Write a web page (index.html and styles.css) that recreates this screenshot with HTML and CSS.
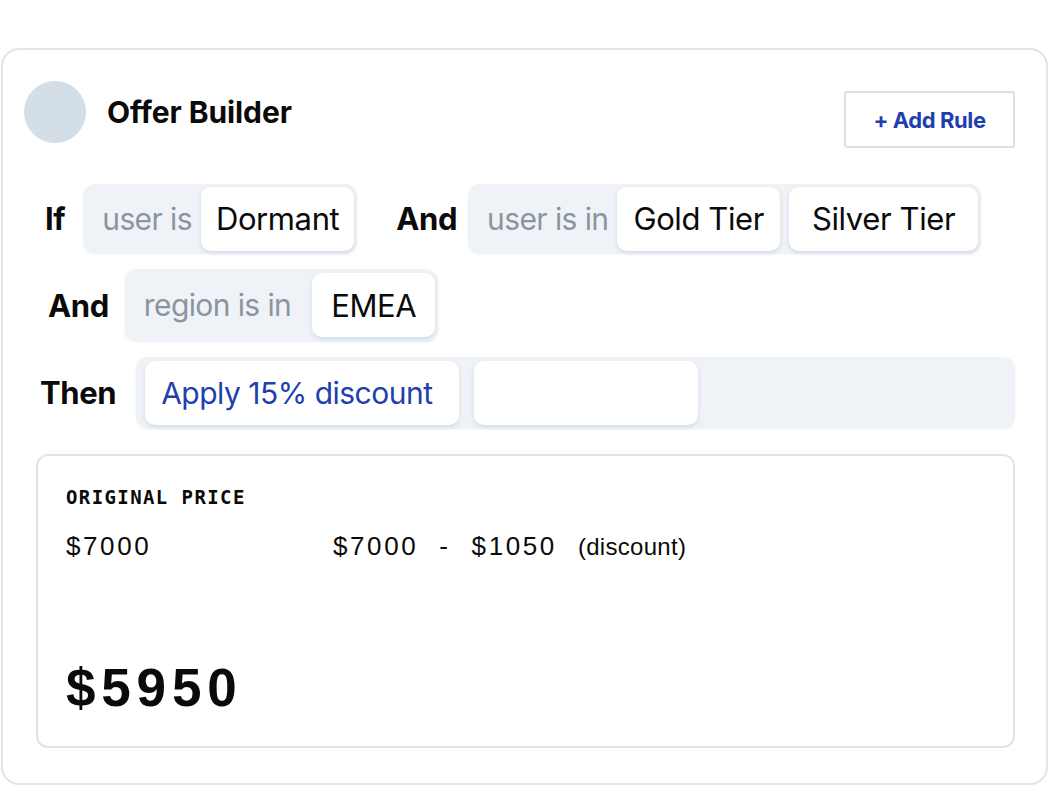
FILE: index.html
```html
<!DOCTYPE html>
<html lang="en">
<head>
<meta charset="utf-8">
<title>Offer Builder</title>
<link rel="stylesheet" href="styles.css">
</head>
<body>
<div class="page">
  <section class="card">
    <header class="header">
      <div class="brand">
        <div class="avatar"></div>
        <h1 class="title">Offer Builder</h1>
      </div>
      <button class="add-btn">+ Add Rule</button>
    </header>

    <div class="rules">
      <div class="row">
        <span class="kw kw-if">If</span>
        <div class="group">
          <span class="label">user is</span>
          <span class="chip">Dormant</span>
        </div>
        <span class="kw kw-and-inline">And</span>
        <div class="group">
          <span class="label">user is in</span>
          <span class="chip chip-gold">Gold Tier</span>
          <span class="chip chip-wide">Silver Tier</span>
        </div>
      </div>

      <div class="row">
        <span class="kw kw-and">And</span>
        <div class="group group-tall">
          <span class="label">region is in</span>
          <span class="chip chip-region">EMEA</span>
        </div>
      </div>

      <div class="row">
        <span class="kw kw-then">Then</span>
        <div class="group group-action">
          <span class="chip chip-action">Apply 15% discount</span>
          <span class="chip chip-empty"></span>
        </div>
      </div>
    </div>

    <div class="price-box">
      <div class="price-label">ORIGINAL PRICE</div>
      <div class="price-lines">
        <span class="num">$7000</span>
        <div class="calc">
          <span class="num">$7000</span>
          <span class="num">-</span>
          <span class="num">$1050</span>
          <span class="note">(discount)</span>
        </div>
      </div>
      <div class="final">$5950</div>
    </div>
  </section>
</div>
</body>
</html>
```

FILE: styles.css
```css
* { box-sizing: border-box; }

html, body {
  margin: 0;
  padding: 0;
  background: #ffffff;
}

body {
  font-family: "Inter", "Liberation Sans", sans-serif;
  color: #0a0a0a;
}

.page {
  padding: 48px 2px 0 1px;
}

.card {
  height: 737px;
  border: 2px solid #dfe6ed;
  border-radius: 18px;
  padding: 31px 31px 0 21px;
}

.header {
  display: flex;
  align-items: flex-start;
}

.brand {
  display: flex;
  align-items: center;
}

.avatar {
  width: 62px;
  height: 62px;
  border-radius: 50%;
  background: #d3dee7;
  flex: none;
}

.title {
  margin: 0 0 0 21px;
  font-size: 30px;
  font-weight: 700;
  letter-spacing: -0.1px;
}

.add-btn {
  margin: 10px 0 0 auto;
  width: 171px;
  height: 57px;
  border: 2px solid #d8e1e9;
  border-radius: 3px;
  background: #fff;
  color: #1f3fae;
  font-family: "Inter", "Liberation Sans", sans-serif;
  font-size: 22px;
  font-weight: 700;
  letter-spacing: -0.4px;
  padding: 0;
}

.rules {
  margin-top: 36px;
  display: flex;
  flex-direction: column;
  gap: 16px;
}

.row {
  display: flex;
  align-items: center;
}

.kw {
  font-size: 31px;
  font-weight: 700;
  letter-spacing: -0.4px;
}

.kw-if { margin: 0 18px 0 21px; }
.kw-and-inline { margin: 0 11px 0 39px; }
.kw-and { margin: 0 16px 0 24px; }
.kw-then { margin: 0 20px 0 16px; }

.group {
  display: flex;
  align-items: center;
  height: 69px;
  padding: 0 3px 0 19px;
  background: #eff3f7;
  border-radius: 12px;
  box-shadow: 0 1px 2px rgba(190, 205, 220, 0.35);
}

.group-tall { height: 72px; }

.group-action {
  flex: 1;
  height: 71px;
  padding: 0 9px;
}

.label {
  font-size: 30px;
  color: #8a959e;
  margin-right: 9px;
  letter-spacing: -0.6px;
}

.group-tall .label { margin-right: 21px; }

.chip {
  display: flex;
  align-items: center;
  height: 64px;
  padding: 0 15px;
  background: #ffffff;
  border-radius: 10px;
  font-size: 31px;
  letter-spacing: -0.4px;
  color: #0a0a0a;
  box-shadow: 0 2px 4px rgba(170, 188, 205, 0.45);
}

.chip + .chip { margin-left: 9px; }

.chip-gold { padding: 0 16px; }

.chip-wide { padding: 0 23px; }

.chip-region { padding: 0 19px; }

.chip-action {
  color: #1f3fae;
  font-size: 30px;
  letter-spacing: -0.5px;
  padding: 0 26px 0 16px;
}

.group-action .chip + .chip { margin-left: 15px; }

.chip-empty {
  width: 224px;
}

.price-box {
  margin: 26px 0 0 12px;
  height: 294px;
  border: 2px solid #dde5ec;
  border-radius: 12px;
  padding: 30px 27px 0 28px;
  display: flex;
  flex-direction: column;
}

.price-label {
  font-family: "DejaVu Sans Mono", monospace;
  font-weight: 700;
  font-size: 19px;
  letter-spacing: 1.4px;
}

.price-lines {
  margin-top: 23px;
  display: flex;
  align-items: baseline;
  font-family: "Liberation Sans", Arial, sans-serif;
}

.price-lines > .num {
  width: 267px;
}

.num {
  font-size: 26px;
  letter-spacing: 0.1em;
}

.calc {
  display: flex;
  align-items: baseline;
  gap: 21px;
}

.note {
  font-size: 24px;
  letter-spacing: 0.3px;
}

.final {
  margin-top: auto;
  margin-bottom: 28px;
  font-family: "Liberation Sans", Arial, sans-serif;
  font-weight: 700;
  font-size: 53px;
  letter-spacing: 0.11em;
}
```
